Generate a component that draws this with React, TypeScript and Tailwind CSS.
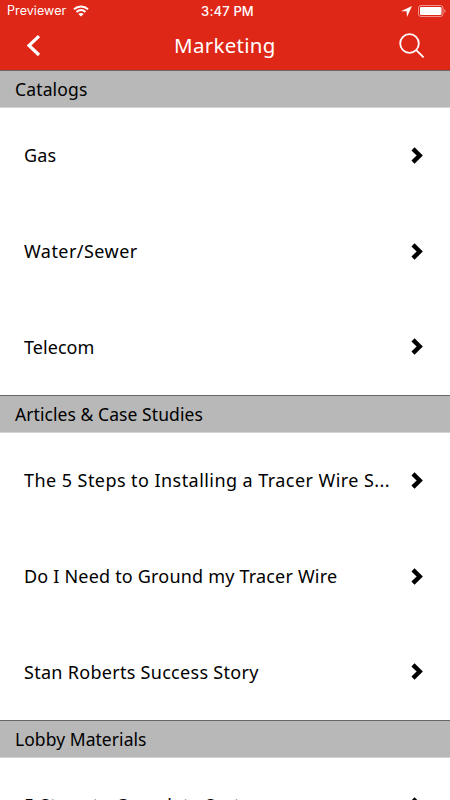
interface RowData {
    text: string
    tracking: string
}

interface SectionData {
    title: string
    tracking: string
    rows: RowData[]
}

const sections: SectionData[] = [
    {
        title: "Catalogs",
        tracking: "tracking-[0.15px]",
        rows: [
            { text: "Gas", tracking: "tracking-[0.15px]" },
            { text: "Water/Sewer", tracking: "tracking-[0.45px]" },
            { text: "Telecom", tracking: "tracking-[0.05px]" },
        ],
    },
    {
        title: "Articles & Case Studies",
        tracking: "tracking-[0.07px]",
        rows: [
            { text: "The 5 Steps to Installing a Tracer Wire S...", tracking: "tracking-[0.44px]" },
            { text: "Do I Need to Ground my Tracer Wire", tracking: "tracking-[0.19px]" },
            { text: "Stan Roberts Success Story", tracking: "tracking-[0.29px]" },
        ],
    },
    {
        title: "Lobby Materials",
        tracking: "tracking-[0.05px]",
        rows: [
            { text: "5 Steps to Complete System", tracking: "tracking-[0.34px]" },
        ],
    },
]

function StatusBar() {
    return (
        <div className="flex h-[22px] items-center pr-[5px] pl-[7px] font-['Inter',sans-serif] text-[13px] leading-none">
            <div className="flex flex-1 items-center gap-[7px]">
                <span className="text-[12.5px] tracking-[0.08px]">Previewer</span>
                <svg className="h-3 w-4" viewBox="0 0 16 12" fill="none" stroke="white" strokeWidth="2">
                    <path d="M1 4.2C5 .5 11 .5 15 4.2" />
                    <path d="M3.5 7C6.2 4.6 9.8 4.6 12.5 7" />
                    <path d="M8 11.6L5.3 8.9C6.8 7.6 9.2 7.6 10.7 8.9Z" fill="white" stroke="none" />
                </svg>
            </div>
            <span className="ml-[3px] font-medium tracking-[0.15px]">3:47 PM</span>
            <div className="flex flex-1 items-center justify-end gap-[6px]">
                <svg className="h-[11px] w-[11px]" viewBox="0 0 11 11" fill="white">
                    <path d="M11 0L0 5.2H5.6L6 11Z" />
                </svg>
                <svg className="-mr-px h-3 w-7" viewBox="0 0 28 12">
                    <rect x=".5" y=".5" width="24.5" height="11" rx="2.5" fill="none" stroke="white" strokeOpacity=".5" />
                    <rect x="2" y="2" width="21.5" height="8" rx="1" fill="white" />
                    <path d="M26.3 4V8C28 7.3 28 4.7 26.3 4Z" fill="white" fillOpacity=".5" />
                </svg>
            </div>
        </div>
    )
}

function NavBar() {
    return (
        <div className="flex h-12 items-center pr-[25px] pl-[26px]">
            <svg className="h-[22px] w-[15px]" viewBox="0 0 15 22" fill="none" stroke="white" strokeWidth="3.2">
                <path d="M13 1.2L3 10.5L13 20" />
            </svg>
            <h1 className="ml-[133px] pb-0.5 text-[20.5px] leading-none tracking-[0.3px]">Marketing</h1>
            <svg className="ml-auto h-[26px] w-[26px]" viewBox="0 0 26 26" fill="none" stroke="white" strokeWidth="1.8">
                <circle cx="10.5" cy="10.5" r="9.3" />
                <path d="M17.2 17.2L24.6 24.3" />
            </svg>
        </div>
    )
}

function Row({ text, tracking }: RowData) {
    return (
        <div className="flex h-[95.7px] shrink-0 items-center pr-[27px] pl-6">
            <span className={`${tracking} text-[18px] whitespace-nowrap`}>{text}</span>
            <svg className="mb-px ml-auto h-[17px] w-3" viewBox="0 0 12 17" fill="none" stroke="black" strokeWidth="4.4">
                <path d="M2 1.9L8.7 8.5L2 15.1" />
            </svg>
        </div>
    )
}

export default function App() {
    return (
        <div className="h-[800px] w-[450px] overflow-hidden bg-white font-['Noto_Sans','Open_Sans',sans-serif] text-black">
            <header className="h-[70px] bg-[#df2718] text-white">
                <StatusBar />
                <NavBar />
            </header>
            {sections.map((section) => (
                <section key={section.title} className="flex h-[325px] flex-col">
                    <h2 className="flex h-[38px] shrink-0 items-center border-t border-b border-t-[#666] border-b-[#d4d4d4] bg-[#b8b8b8] px-[15px] text-[17.5px]">
                        <span className={section.tracking}>{section.title}</span>
                    </h2>
                    {section.rows.map((row) => (
                        <Row key={row.text} {...row} />
                    ))}
                </section>
            ))}
        </div>
    )
}
